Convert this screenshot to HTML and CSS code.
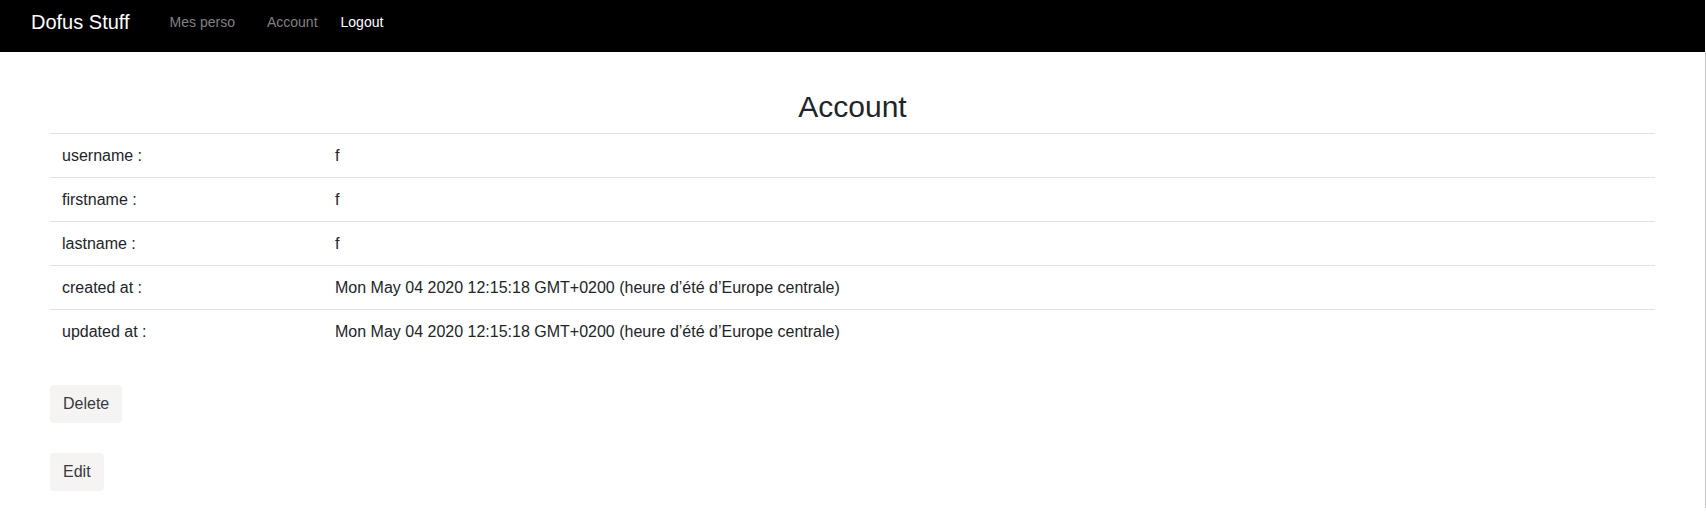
FILE: index.html
```html
<!DOCTYPE html>
<html lang="fr">
<head>
<meta charset="utf-8">
<title>Dofus Stuff</title>
<link rel="stylesheet" href="styles.css">
</head>
<body>
<nav class="navbar">
  <a class="brand" href="#">Dofus Stuff</a>
  <a class="nav-link link-perso" href="#">Mes perso</a>
  <a class="nav-link link-account" href="#">Account</a>
  <a class="nav-link link-logout" href="#">Logout</a>
</nav>
<main class="main">
  <h2 class="title">Account</h2>
  <table class="info">
    <tbody>
      <tr><td class="label">username :</td><td>f</td></tr>
      <tr><td class="label">firstname :</td><td>f</td></tr>
      <tr><td class="label">lastname :</td><td>f</td></tr>
      <tr><td class="label">created at :</td><td>Mon May 04 2020 12:15:18 GMT+0200 (heure d’été d’Europe centrale)</td></tr>
      <tr><td class="label">updated at :</td><td>Mon May 04 2020 12:15:18 GMT+0200 (heure d’été d’Europe centrale)</td></tr>
    </tbody>
  </table>
  <div class="actions">
    <button class="btn btn-delete" type="button">Delete</button>
    <button class="btn" type="button">Edit</button>
  </div>
</main>
</body>
</html>
```
FILE: styles.css
```css
* { box-sizing: border-box; }
html, body { margin: 0; padding: 0; background: #fff; }
body {
  font-family: "Liberation Sans", Arial, sans-serif;
  font-size: 16px;
  color: #212529;
}
.navbar {
  height: 52px;
  background: #000;
  margin-right: 1px;
  display: flex;
  align-items: flex-start;
  padding: 7px 0 0 31px;
}
.brand {
  color: #fff;
  font-size: 20px;
  line-height: 30px;
  text-decoration: none;
}
.nav-link {
  font-size: 14px;
  line-height: 30px;
  text-decoration: none;
  color: #808080;
}
.link-perso { margin-left: 40px; }
.link-account { margin-left: 32px; }
.link-logout { margin-left: 23px; color: #fff; }

.main {
  border-right: 1px solid #c6c6c6;
  padding: 37px 50px 17px 50px;
}
.title {
  margin: 0 0 8px;
  text-align: center;
  font-size: 30px;
  font-weight: 400;
  line-height: 36px;
}
.info {
  width: 100%;
  border-collapse: collapse;
}
.info td {
  border-top: 1px solid #dee2e6;
  padding: 10px 12px 9px;
  line-height: 24px;
  vertical-align: top;
}
.info td.label { width: 273px; }
.actions {
  display: flex;
  flex-direction: column;
  align-items: flex-start;
  margin-top: 32px;
}
.btn {
  font-family: inherit;
  font-size: 16px;
  line-height: 24px;
  color: #343a40;
  background: #f5f4f2;
  border: 1px solid #f5f4f2;
  border-radius: 4px;
  padding: 6px 12px;
}
.btn-delete { margin-bottom: 30px; }
```
